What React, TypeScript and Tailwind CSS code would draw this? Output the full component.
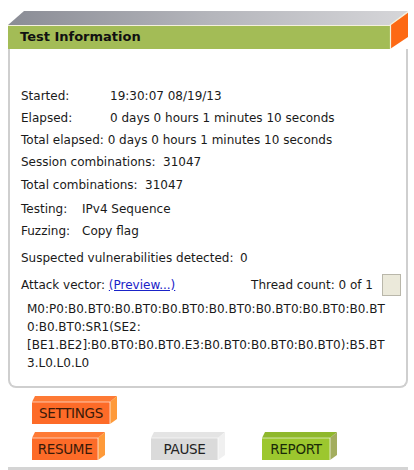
import React from "react";

const font = { fontFamily: '"DejaVu Sans", Verdana, sans-serif' };

type BtnProps = {
  label: string;
  w: number;
  front: string;
  top: string;
  side: string;
  textCls: string;
};

function Btn3D({ label, w, front, top, side, textCls }: BtnProps) {
  return (
    <div className="relative" style={{ width: w + 7, height: 28 }}>
      <svg
        className="absolute left-0 top-0"
        width={w + 7}
        height={28}
        viewBox={`0 0 ${w + 7} 28`}
      >
        <polygon points={`3,0 ${w + 7},0 ${w},6 0,6`} fill={top} />
        <polygon points={`${w},6 ${w + 7},0 ${w + 7},23 ${w},28`} fill={side} />
        <rect x={0} y={6} width={w} height={22} fill={front} />
        <line x1={0} y1={6} x2={w} y2={6} stroke="#ffffff" strokeOpacity={0.6} strokeWidth={1} />
        <line x1={w} y1={6} x2={w} y2={28} stroke="#ffffff" strokeOpacity={0.7} strokeWidth={1} />
      </svg>
      <div
        className={`absolute left-0 top-[6px] flex h-[22px] items-center justify-center text-[13.5px] tracking-[-0.3px] ${textCls}`}
        style={{ width: w }}
      >
        {label}
      </div>
    </div>
  );
}

export default function App() {
  return (
    <div className="relative h-[470px] w-[414px] overflow-hidden bg-white text-[12px] text-[#1a1a1a]" style={font}>
      <div className="ml-[8px] pt-[11px] w-[400px]">
        {/* header */}
        <div className="relative h-[38px]">
          <svg className="absolute left-0 top-0" width={400} height={38} viewBox="0 0 400 38">
            <defs>
              <linearGradient id="gbev" x1="0" y1="0" x2="1" y2="0">
                <stop offset="0" stopColor="#8a8c95" />
                <stop offset="0.5" stopColor="#b4b5bb" />
                <stop offset="1" stopColor="#d6d6d9" />
              </linearGradient>
            </defs>
            <polygon points="16,0 400,0 382,14 0,14" fill="url(#gbev)" />
            <rect x={0} y={14} width={382} height={24} fill="#a3bc56" />
            <polygon points="382,14 400,1 400,26 382,38" fill="#fd6914" />
            <line x1={0} y1={14.5} x2={382} y2={14.5} stroke="#f4f1dc" strokeWidth={1.2} />
            <line x1={382} y1={14} x2={400} y2={1} stroke="#f4f1dc" strokeWidth={1.2} />
            <line x1={382.5} y1={14} x2={382.5} y2={38} stroke="#f4f1dc" strokeWidth={1.2} />
          </svg>
          <div className="relative pl-[12px] pt-[15px] text-[13px] font-bold leading-[22px] text-[#111]">
            Test Information
          </div>
        </div>
        {/* body */}
        <div className="h-[339px] rounded-b-[8px] border-x-2 border-b-2 border-[#cfcfcf] pl-[11px] pt-[36px] leading-[22px]">
          <div className="flex"><span className="w-[89px]">Started:</span><span>19:30:07 08/19/13</span></div>
          <div className="flex"><span className="w-[89px]">Elapsed:</span><span>0 days 0 hours 1 minutes 10 seconds</span></div>
          <div>Total elapsed: 0 days 0 hours 1 minutes 10 seconds</div>
          <div className="flex"><span className="w-[142px]">Session combinations:</span><span>31047</span></div>
          <div className="mt-[1px] flex"><span className="w-[124px]">Total combinations:</span><span>31047</span></div>
          <div className="mt-[2px] flex"><span className="w-[61px]">Testing:</span><span>IPv4 Sequence</span></div>
          <div className="flex"><span className="w-[61px]">Fuzzing:</span><span>Copy flag</span></div>
          <div className="mt-[5px] flex"><span className="w-[219px]">Suspected vulnerabilities detected:</span><span>0</span></div>
          <div className="mt-[5px] flex items-center">
            <span>Attack vector:&nbsp;</span>
            <span className="text-[#1a23c8] underline">(Preview...)</span>
            <span className="ml-auto">Thread count: 0 of 1</span>
            <span className="ml-[9px] mr-[5px] h-[22px] w-[19px] border border-[#b9b7aa] bg-[#ebe9da]"></span>
          </div>
          <div className="mt-[4px] pl-[6px] leading-[18px]">
            <div>M0:P0:B0.BT0:B0.BT0:B0.BT0:B0.BT0:B0.BT0:B0.BT0:B0.BT</div>
            <div>0:B0.BT0:SR1(SE2:</div>
            <div>[BE1.BE2]:B0.BT0:B0.BT0.E3:B0.BT0:B0.BT0:B0.BT0):B5.BT</div>
            <div>3.L0.L0.L0</div>
          </div>
        </div>
      </div>
      {/* buttons */}
      <div className="ml-[32px] mt-[8px]">
        <Btn3D label="SETTINGS" w={78} front="#fd6b28" top="#fe7a35" side="#fe9a3a" textCls="text-[#3a1a08]" />
        <div className="mt-[8px] flex">
          <Btn3D label="RESUME" w={66} front="#fd6b28" top="#fe7a35" side="#fe9a3a" textCls="text-[#3a1a08]" />
          <div className="ml-[46px]">
            <Btn3D label="PAUSE" w={67} front="#dadada" top="#e4e4e4" side="#f0f0f0" textCls="text-[#222]" />
          </div>
          <div className="ml-[37px]">
            <Btn3D label="REPORT" w={68} front="#9cc72e" top="#8fb82c" side="#a3ad5e" textCls="text-[#1a2a08]" />
          </div>
        </div>
      </div>
      <div className="absolute bottom-0 left-[8px] h-[3px] w-[400px] bg-[#d4d4d4]"></div>
    </div>
  );
}
